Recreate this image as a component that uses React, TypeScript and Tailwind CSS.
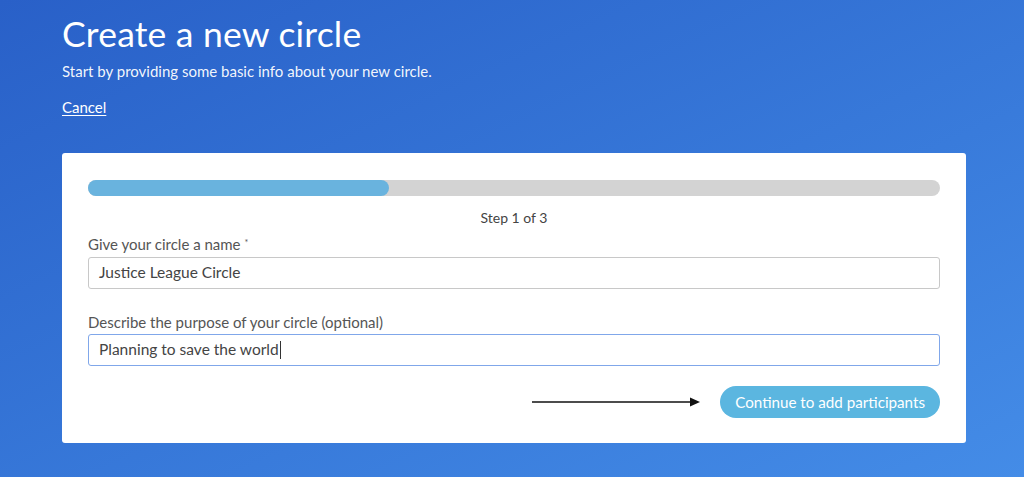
export default function App() {
  return (
    <div
      className="w-[1024px] h-[477px] overflow-hidden bg-gradient-to-br from-[#2960c8] to-[#448ce7] px-[62px] pt-[12px] text-white"
      style={{ fontFamily: "Lato, 'Noto Sans', sans-serif" }}
    >
      <h1 className="text-[35.5px] leading-[44px] font-normal tracking-[0.2px]">Create a new circle</h1>
      <p className="mt-[5px] text-[15px] leading-[20px] text-white/95">
        Start by providing some basic info about your new circle.
      </p>
      <a href="#" className="mt-[16px] inline-block text-[15px] leading-[20px] underline underline-offset-2">
        Cancel
      </a>

      <div className="mt-[34px] w-[904px] h-[290px] rounded-[3px] bg-white px-[26px] pt-[27px] text-[#4a4a4a]">
        <div className="h-[16px] w-full rounded-full bg-[#d3d3d3]">
          <div className="h-full w-[301px] rounded-full bg-[#69b3de]" />
        </div>
        <p className="mt-[12px] text-center text-[14px] leading-[20px] text-[#444]">Step 1 of 3</p>

        <label className="mt-[6px] block text-[15px] leading-[20px] text-[#555]">
          Give your circle a name <sup className="text-[9px]">*</sup>
        </label>
        <div className="mt-[3px] flex h-[32px] items-center rounded-[3px] border border-[#c8c8c8] px-[10px] text-[15.5px] text-[#444]">
          Justice League Circle
        </div>

        <label className="mt-[23px] block text-[15px] leading-[20px] text-[#555]">
          Describe the purpose of your circle (optional)
        </label>
        <div className="mt-[2px] flex h-[32px] items-center rounded-[3px] border border-[#80a7ea] px-[10px] text-[15.5px] text-[#444]">
          Planning to save the world
          <span className="ml-[1px] h-[18px] w-px bg-[#333]" />
        </div>

        <div className="mt-[20px] flex items-center justify-end gap-[20px]">
          <svg width="168" height="10" viewBox="0 0 168 10">
            <line x1="0" y1="5" x2="158" y2="5" stroke="#111" strokeWidth="1.6" />
            <polygon points="158,0.5 168,5 158,9.5" fill="#111" />
          </svg>
          <button className="h-[32px] rounded-full bg-[#5bb6e0] px-[15px] text-[15.2px] text-white">
            Continue to add participants
          </button>
        </div>
      </div>
    </div>
  );
}
